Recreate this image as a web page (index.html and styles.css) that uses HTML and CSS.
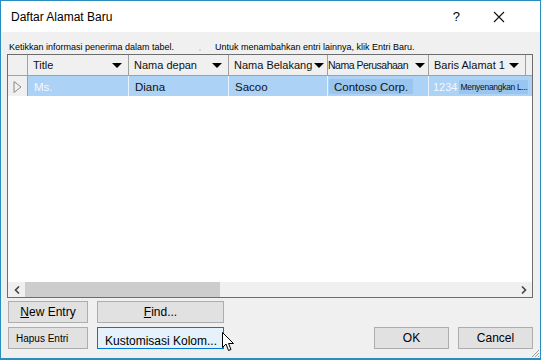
FILE: index.html
```html
<!DOCTYPE html>
<html lang="id">
<head>
    <meta charset="UTF-8">
    <title>Daftar Alamat Baru</title>
    <link rel="stylesheet" href="styles.css">
</head>
<body>
    <div class="window">
        <!-- Barra del titolo -->
        <div class="titlebar">
            <span class="title">Daftar Alamat Baru</span>
            <span class="help">?</span>
            <svg class="close" width="12" height="12" viewBox="0 0 12 12">
                <path d="M1 1 L11 11 M11 1 L1 11" stroke="#111" stroke-width="1.1" fill="none"/>
            </svg>
        </div>

        <div class="content">
            <div class="hint">
                <span class="hint-left">Ketikkan informasi penerima dalam tabel.</span>
                <span class="hint-dot"></span>
                <span>Untuk menambahkan entri lainnya, klik Entri Baru.</span>
            </div>

            <!-- Tabella degli indirizzi -->
            <div class="grid">
                <div class="row header">
                    <div class="cell selector"></div>
                    <div class="cell"><span>Title</span><i class="arrow"></i></div>
                    <div class="cell"><span>Nama depan</span><i class="arrow"></i></div>
                    <div class="cell"><span>Nama Belakang</span><i class="arrow"></i></div>
                    <div class="cell tight"><span>Nama Perusahaan</span><i class="arrow"></i></div>
                    <div class="cell"><span>Baris Alamat 1</span><i class="arrow"></i></div>
                    <div class="cell last"></div>
                </div>
                <div class="row data">
                    <div class="cell selector">
                        <svg width="9" height="12" viewBox="0 0 9 12">
                            <path d="M1 0.5 L8 6 L1 11.5 Z" fill="none" stroke="#8a8a8a" stroke-width="1"/>
                        </svg>
                    </div>
                    <div class="cell light">Ms.</div>
                    <div class="cell">Diana</div>
                    <div class="cell">Sacoo</div>
                    <div class="cell"><span class="mark">Contoso Corp.</span></div>
                    <div class="cell spill"><span class="light num">1234</span><span class="mark small">Menyenangkan L...</span></div>
                    <div class="cell last"></div>
                </div>
                <div class="blank"></div>
                <div class="hscroll">
                    <span class="sarrow">
                        <svg width="6" height="8" viewBox="0 0 6 8"><path d="M5 0.5 L1.5 4 L5 7.5" stroke="#444" stroke-width="1.6" fill="none"/></svg>
                    </span>
                    <span class="thumb"></span>
                    <span class="track"></span>
                    <span class="sarrow">
                        <svg width="6" height="8" viewBox="0 0 6 8"><path d="M1 0.5 L4.5 4 L1 7.5" stroke="#444" stroke-width="1.6" fill="none"/></svg>
                    </span>
                </div>
            </div>

            <!-- Pulsanti -->
            <div class="buttons">
                <button class="btn"><u>N</u>ew Entry</button>
                <button class="btn"><u>F</u>ind...</button>
                <span></span><span></span><span></span>
                <button class="btn small-btn">Hapus Entri</button>
                <button class="btn focused">Kustomisasi Kolom...
                    <svg class="cursor" width="13" height="20" viewBox="0 0 13 20">
                        <path d="M0.5 0.5 L0.5 15.5 L4 12 L6.5 18.5 L9 17.5 L6.5 11.5 L11.5 11.5 Z" fill="#fff" stroke="#000" stroke-width="1"/>
                    </svg>
                </button>
                <span></span>
                <button class="btn">OK</button>
                <button class="btn">Cancel</button>
            </div>
        </div>

        <svg class="grip" width="9" height="9" viewBox="0 0 9 9">
            <path d="M8 1 L1 8 M8 4 L4 8 M8 7 L7 8" stroke="#a0a0a0" stroke-width="1" fill="none"/>
        </svg>
    </div>
</body>
</html>
```

FILE: styles.css
```css
body {
    margin: 0;
    background-color: #f0f0f0;
    font-family: "Liberation Sans", Arial, sans-serif;
}
.window {
    position: relative;
    width: 541px;
    height: 360px;
    box-sizing: border-box;
    border: 1px solid #2a8dbf; /* Bordo azzurro della finestra */
    border-bottom-width: 2px;
    background-color: #f0f0f0;
    display: flex;
    flex-direction: column;
}
.titlebar {
    height: 31px;
    background-color: #fff;
    display: flex;
    align-items: center;
    padding: 0 0 0 10px;
    color: #000;
}
.titlebar .title {
    font-size: 12px;
    flex: 1;
    padding-top: 1px;
}
.titlebar .help {
    font-size: 13px;
    margin-right: 33px;
}
.titlebar .close {
    margin-right: 35px;
}
.content {
    flex: 1;
    padding: 0 7px 0 6px;
    display: flex;
    flex-direction: column;
}
.hint {
    height: 22px;
    box-sizing: border-box;
    padding: 10px 0 0 2px;
    font-size: 9px;
    color: #000;
    display: flex;
    align-items: flex-start;
}
.hint-left {
    width: 190px;
}
.hint-dot {
    width: 2px;
    height: 2px;
    background-color: #bfe0f0;
    margin: 7px 14px 0 0;
}

/* Tabella */
.grid {
    height: 244px;
    box-sizing: border-box;
    border: 1px solid #6d6d6d;
    background-color: #fff;
    display: flex;
    flex-direction: column;
    overflow: hidden;
}
.row {
    display: grid;
    grid-template-columns: 20px 101px 100px 99px 101px 97px 1fr;
}
.header {
    height: 20px;
    background-color: #f0f0f0;
    border-bottom: 1px solid #a0a0a0;
}
.cell {
    border-right: 1px solid #a0a0a0;
    display: flex;
    align-items: center;
    padding: 0 6px;
    font-size: 11.5px;
    color: #111;
    white-space: nowrap;
    overflow: hidden;
}
.header .cell {
    justify-content: space-between;
    font-size: 11px;
    padding: 0 6px 0 5px;
}
.header .cell.tight {
    padding: 0 3px 0 0;
    letter-spacing: -0.5px;
    font-size: 10.5px;
}
.cell.last {
    border-right: none;
    padding: 0;
}
.cell.selector {
    padding: 0;
    justify-content: center;
}
.arrow {
    width: 0;
    height: 0;
    border-left: 5px solid transparent;
    border-right: 5px solid transparent;
    border-top: 5px solid #000;
    flex-shrink: 0;
    margin-left: 2px;
}
.data {
    height: 20px;
    background-color: #acd2f6;
}
.data .cell {
    border-right-color: #e8f2fc;
    padding-top: 1px;
}
.data .cell.selector {
    background-color: #f0f0f0;
    border-right-color: #a0a0a0;
}
.data .cell.spill {
    overflow: visible;
    border-right: none;
    padding: 1px 0 0 4px;
}
.data .light {
    color: #f4f8fd;
}
.data .num {
    font-size: 11px;
}
.data .mark {
    background-color: #99c5ee;
    padding: 2px 5px 1px 5px;
    margin-left: -5px;
}
.data .mark.small {
    font-size: 8.5px;
    letter-spacing: -0.3px;
    margin-left: 2px;
    padding: 2px 0 2px 1px;
}
.blank {
    flex: 1;
}
.hscroll {
    height: 15px;
    display: flex;
    background-color: #f0f0f0;
}
.sarrow {
    width: 17px;
    display: flex;
    align-items: center;
    justify-content: center;
}
.thumb {
    width: 195px;
    background-color: #cdcdcd;
}
.track {
    flex: 1;
}

/* Pulsanti */
.buttons {
    display: grid;
    grid-template-columns: 80px 127px 1fr 75px 75px;
    grid-template-rows: 22px 22px;
    column-gap: 9px;
    row-gap: 4px;
    padding: 3px 0 0 1px;
}
.btn {
    position: relative;
    background-color: #e1e1e1;
    border: 1px solid #adadad;
    font-family: "Liberation Sans", Arial, sans-serif;
    font-size: 12px;
    color: #000;
    padding: 0;
}
.small-btn {
    font-size: 10px;
    text-align: left;
    padding-left: 7px;
}
.focused {
    background-color: #e5f1fb;
    border-color: #0078d7;
    padding-top: 5px;
    text-align: left;
    padding-left: 7px;
}
.cursor {
    position: absolute;
    right: -12px;
    top: 4px;
}
.grip {
    position: absolute;
    right: 0;
    bottom: 0;
}
```
